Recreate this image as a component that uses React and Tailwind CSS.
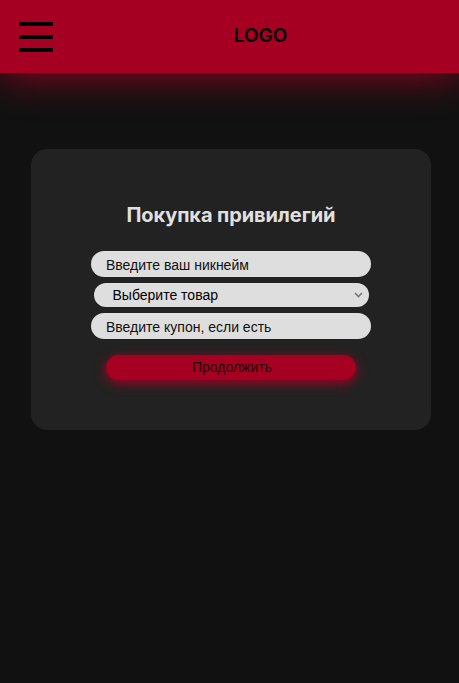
import React from 'react';

const App = () => {
    return (
        <div className="min-h-[683px] bg-[#111111] font-['Liberation_Sans',Arial,sans-serif]">
            <header className="relative z-10 h-[73px] bg-[#a50021] shadow-[0_0_40px_#a50021] flex items-center px-[19px]">
                <button className="flex flex-col gap-[9px] w-[34px]">
                    <span className="block h-[4px] w-full bg-black"></span>
                    <span className="block h-[4px] w-full bg-black"></span>
                    <span className="block h-[4px] w-full bg-black"></span>
                </button>
                <div className="flex-1 text-center pl-[28px] text-[19px] font-semibold text-black font-['Inter',sans-serif]">
                    LOGO
                </div>
            </header>

            <main className="px-[31px] pt-[76px]">
                <div className="w-[400px] h-[281px] bg-[#222222] rounded-[16px] flex flex-col items-center pt-[51px]">
                    <h1 className="text-[20px] font-bold text-[#e0e0e0] font-['Inter',sans-serif] tracking-[-0.1px]">
                        Покупка привилегий
                    </h1>
                    <form className="mt-[21px] flex flex-col items-center">
                        <input
                            type="text"
                            placeholder="Введите ваш никнейм"
                            className="w-[280px] h-[26px] rounded-full bg-[#dedede] px-[15px] pt-[1px] text-[14px] text-black placeholder:text-[#111] outline-none"
                        />
                        <div className="relative mt-[6px]">
                            <select
                                defaultValue=""
                                className="appearance-none block w-[275px] h-[24px] rounded-full bg-[#dedede] pl-[19px] pr-[20px] text-[14px] text-black outline-none"
                            >
                                <option value="" disabled>Выберите товар</option>
                                <option>VIP</option>
                                <option>Premium</option>
                            </select>
                            <svg
                                className="pointer-events-none absolute right-[6px] top-[9px]"
                                width="9"
                                height="6"
                                viewBox="0 0 9 6"
                                fill="none"
                            >
                                <path d="M1 1l3.5 3.5L8 1" stroke="#777" strokeWidth="1.6" />
                            </svg>
                        </div>
                        <input
                            type="text"
                            placeholder="Введите купон, если есть"
                            className="mt-[6px] w-[280px] h-[26px] rounded-full bg-[#dedede] px-[15px] pt-[1px] text-[14px] text-black placeholder:text-[#111] outline-none"
                        />
                        <button
                            type="button"
                            className="mt-[16px] w-[250px] h-[25px] rounded-full bg-[#a50021] shadow-[0_3px_12px_#a50021] text-[14px] text-[#1c0006] text-center pl-[2px]"
                        >
                            Продолжить
                        </button>
                    </form>
                </div>
            </main>
        </div>
    );
};

export default App;
